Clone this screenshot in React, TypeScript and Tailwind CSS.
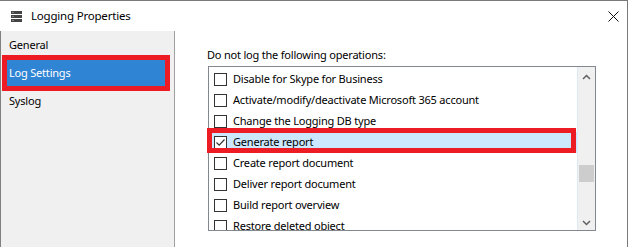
import React from 'react';

const items = [
    { label: 'Disable for Skype for Business', checked: false },
    { label: 'Activate/modify/deactivate Microsoft 365 account', checked: false },
    { label: 'Change the Logging DB type', checked: false },
    { label: 'Generate report', checked: true, selected: true },
    { label: 'Create report document', checked: false },
    { label: 'Deliver report document', checked: false },
    { label: 'Build report overview', checked: false },
    { label: 'Restore deleted object', checked: false },
];

const Checkbox = ({ checked }: { checked: boolean }) => (
    <span className="w-[13px] h-[13px] border border-[#333] bg-white flex items-center justify-center shrink-0">
        {checked && (
            <svg width="11" height="11" viewBox="0 0 11 11">
                <path d="M1.5 5.5 L4.2 8.2 L9.5 2.5" fill="none" stroke="#333" strokeWidth="1.2" />
            </svg>
        )}
    </span>
);

const App = () => {
    return (
        <div className="w-[628px] h-[247px] bg-white border-t border-r border-[#7a7a7a] flex flex-col overflow-hidden font-['Segoe_UI','Noto_Sans',sans-serif] text-[11px] tracking-[-0.2px] text-black">
            {/* title bar */}
            <div className="h-[30px] flex items-center shrink-0">
                <svg className="ml-[11px]" width="11" height="11" viewBox="0 0 11 11">
                    <rect x="0" y="0" width="11" height="3" fill="#444" />
                    <rect x="0" y="4" width="11" height="3" fill="#444" />
                    <rect x="0" y="8" width="11" height="3" fill="#444" />
                    <rect x="1.5" y="1" width="1" height="1" fill="#bbb" />
                    <rect x="1.5" y="5" width="1" height="1" fill="#bbb" />
                    <rect x="1.5" y="9" width="1" height="1" fill="#bbb" />
                </svg>
                <span className="ml-[9px] text-[11.5px]">Logging Properties</span>
                <svg className="ml-auto mr-[8px]" width="11" height="11" viewBox="0 0 11 11">
                    <path d="M0.5 0.5 L10.5 10.5 M10.5 0.5 L0.5 10.5" stroke="#111" strokeWidth="1" />
                </svg>
            </div>

            <div className="flex flex-1 min-h-0">
                {/* sidebar */}
                <div className="w-[175px] shrink-0 bg-[#f0f0f0] border-l border-l-[#808080] border-r border-r-[#a0a0a0]">
                    <div className="h-[28px] flex items-center pl-[8px]">General</div>
                    <div className="h-[28px] py-[1px] px-[6px]">
                        <div className="h-[26px] bg-[#2f84d3] text-white flex items-center pl-[2px] w-[158px] outline-[5px] outline-solid outline-[#ed1c24]">
                            Log Settings
                        </div>
                    </div>
                    <div className="h-[28px] flex items-center pl-[8px]">Syslog</div>
                </div>

                {/* main */}
                <div className="flex-1 flex flex-col">
                    <div className="pl-[32px] pt-[16px] leading-[16px]">Do not log the following operations:</div>
                    <div className="relative ml-[33px] mt-[3px] w-[388px] h-[165px] border border-[#828790] flex">
                        <div className="flex-1 overflow-hidden border-r border-r-[#dceaf7] pt-[2px]">
                            {items.map((it) => (
                                <div
                                    key={it.label}
                                    className={`h-[21px] flex items-center pl-[5px] gap-[6px] whitespace-nowrap ${it.selected ? 'bg-[#cce8ff]' : ''}`}
                                >
                                    <Checkbox checked={it.checked} />
                                    <span>{it.label}</span>
                                </div>
                            ))}
                        </div>
                        <div className="w-[17px] shrink-0 bg-[#f0f0f0] flex flex-col items-center">
                            <svg className="mt-[7px]" width="9" height="6" viewBox="0 0 9 6">
                                <path d="M1 5 L4.5 1.5 L8 5" fill="none" stroke="#606060" strokeWidth="1.5" />
                            </svg>
                            <div className="mt-[85px] w-[15px] h-[17px] bg-[#cdcdcd]" />
                            <svg className="mt-auto mb-[4px]" width="9" height="6" viewBox="0 0 9 6">
                                <path d="M1 1 L4.5 4.5 L8 1" fill="none" stroke="#606060" strokeWidth="1.5" />
                            </svg>
                        </div>
                        {/* highlight annotation */}
                        <div className="absolute left-[-2px] top-[61px] w-[369px] h-[25px] border-[5px] border-[#ed1c24] pointer-events-none" />
                    </div>
                </div>
            </div>
        </div>
    );
};

export default App;
